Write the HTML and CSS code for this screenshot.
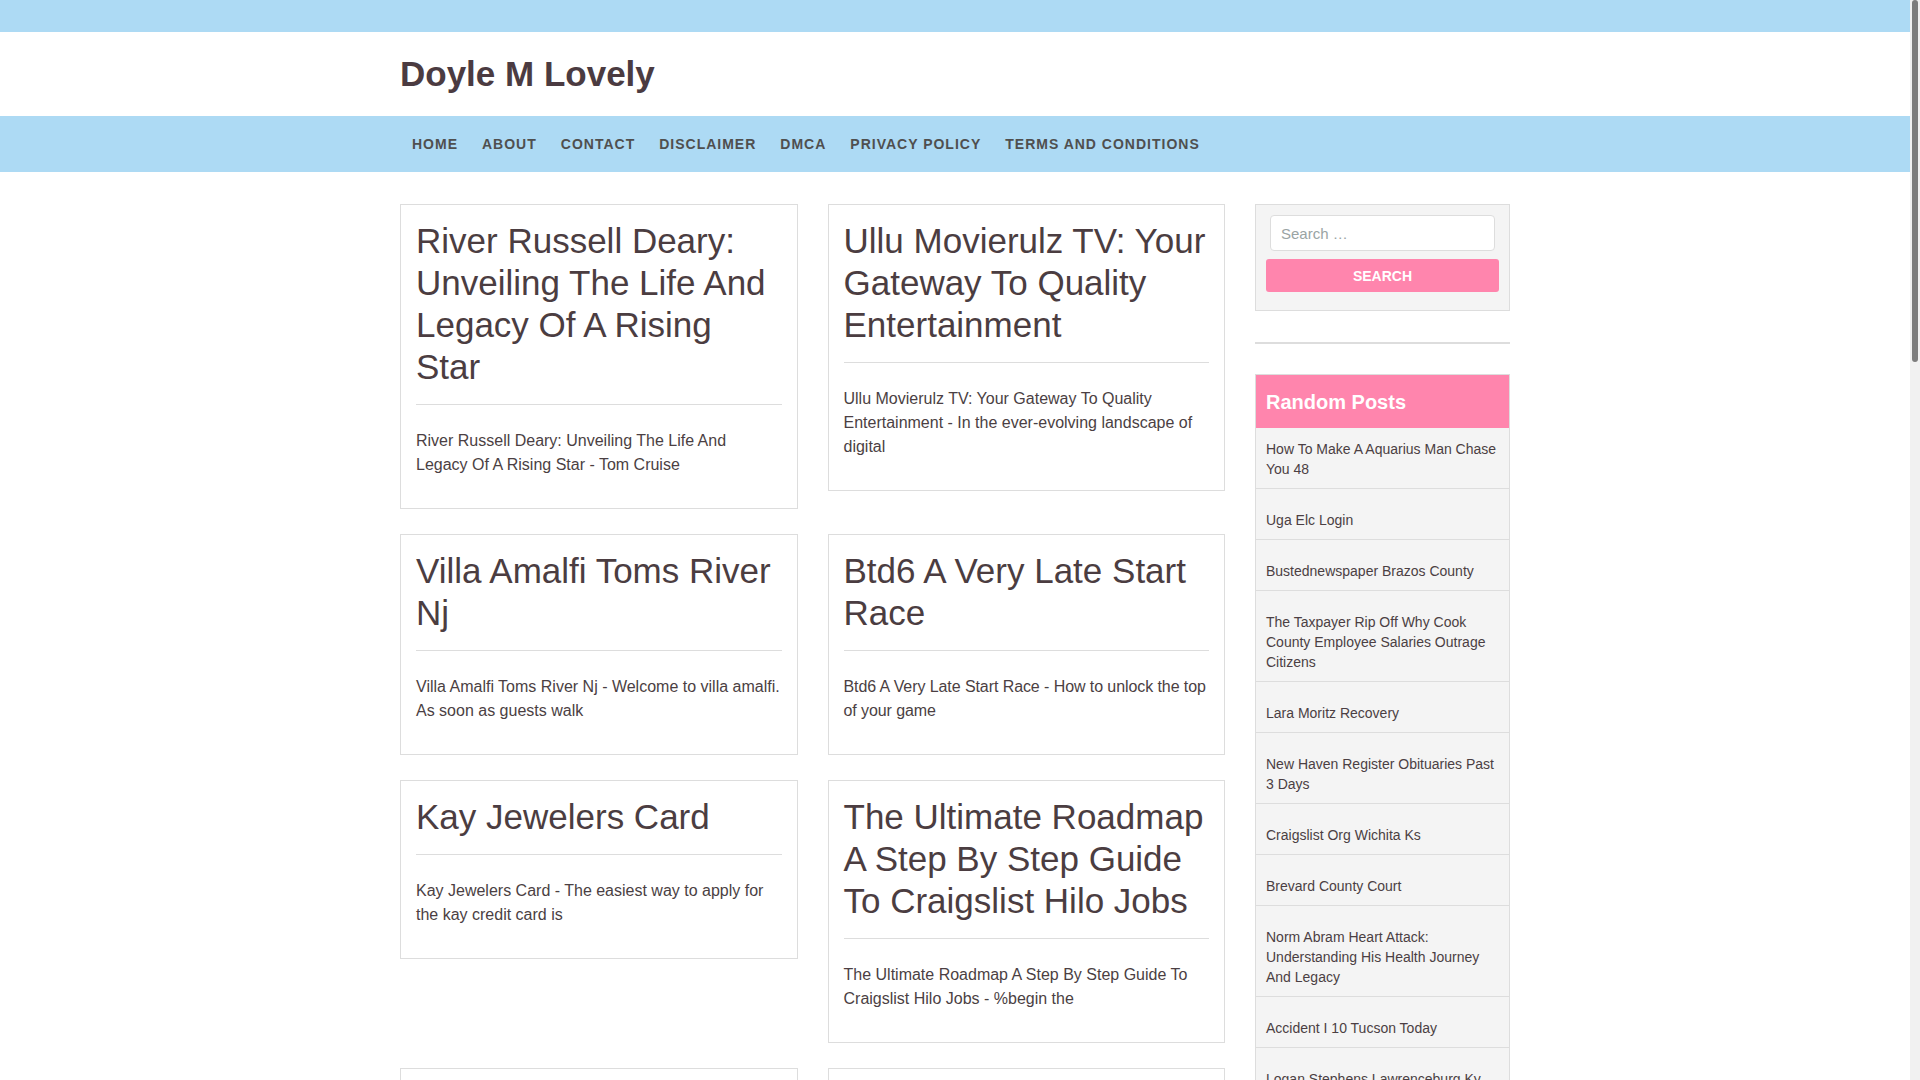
FILE: index.html
```html
<!DOCTYPE html>
<html lang="en">
<head>
<meta charset="utf-8">
<title>Doyle M Lovely</title>
<link rel="stylesheet" href="styles.css">
</head>
<body>
<div class="topbar"></div>
<header class="site-header">
  <div class="container">
    <h1 class="site-title">Doyle M Lovely</h1>
  </div>
</header>
<nav class="main-nav">
  <div class="container">
    <ul class="menu">
      <li><a href="#">Home</a></li>
      <li><a href="#">About</a></li>
      <li><a href="#">Contact</a></li>
      <li><a href="#">Disclaimer</a></li>
      <li><a href="#">DMCA</a></li>
      <li><a href="#">Privacy Policy</a></li>
      <li><a href="#">Terms and Conditions</a></li>
    </ul>
  </div>
</nav>
<div class="container content">
  <main class="posts">
    <article class="card">
      <h2 class="card-title">River Russell Deary: Unveiling The Life And Legacy Of A Rising Star</h2>
      <hr class="card-rule">
      <p class="card-excerpt">River Russell Deary: Unveiling The Life And Legacy Of A Rising Star - Tom Cruise</p>
    </article>
    <article class="card">
      <h2 class="card-title">Ullu Movierulz TV: Your Gateway To Quality Entertainment</h2>
      <hr class="card-rule">
      <p class="card-excerpt">Ullu Movierulz TV: Your Gateway To Quality Entertainment - In the ever-evolving landscape of digital</p>
    </article>
    <article class="card">
      <h2 class="card-title">Villa Amalfi Toms River Nj</h2>
      <hr class="card-rule">
      <p class="card-excerpt">Villa Amalfi Toms River Nj - Welcome to villa amalfi. As soon as guests walk</p>
    </article>
    <article class="card">
      <h2 class="card-title">Btd6 A Very Late Start Race</h2>
      <hr class="card-rule">
      <p class="card-excerpt card-excerpt-tight">Btd6 A Very Late Start Race - How to unlock the top of your game</p>
    </article>
    <article class="card">
      <h2 class="card-title">Kay Jewelers Card</h2>
      <hr class="card-rule">
      <p class="card-excerpt">Kay Jewelers Card - The easiest way to apply for the kay credit card is</p>
    </article>
    <article class="card">
      <h2 class="card-title">The Ultimate Roadmap A Step By Step Guide To Craigslist Hilo Jobs</h2>
      <hr class="card-rule">
      <p class="card-excerpt">The Ultimate Roadmap A Step By Step Guide To Craigslist Hilo Jobs - %begin the</p>
    </article>
    <article class="card">
      <h2 class="card-title">Craigslist Org Wichita Ks</h2>
      <hr class="card-rule">
      <p class="card-excerpt">Craigslist Org Wichita Ks - Find local listings for jobs, housing and more</p>
    </article>
    <article class="card">
      <h2 class="card-title">Brevard County Court</h2>
      <hr class="card-rule">
      <p class="card-excerpt">Brevard County Court - Records, calendars and information for the public</p>
    </article>
  </main>
  <aside class="sidebar">
    <div class="widget search-widget">
      <form class="search-form">
        <input class="search-field" type="search" placeholder="Search …">
        <button class="search-submit" type="button">Search</button>
      </form>
    </div>
    <div class="widget-sep"></div>
    <div class="widget posts-widget">
      <h3 class="widget-title">Random Posts</h3>
      <ul class="post-list">
        <li><a href="#">How To Make A Aquarius Man Chase You 48</a></li>
        <li><a href="#">Uga Elc Login</a></li>
        <li><a href="#">Bustednewspaper Brazos County</a></li>
        <li><a href="#">The Taxpayer Rip Off Why Cook County Employee Salaries Outrage Citizens</a></li>
        <li><a href="#">Lara Moritz Recovery</a></li>
        <li><a href="#">New Haven Register Obituaries Past 3 Days</a></li>
        <li><a href="#">Craigslist Org Wichita Ks</a></li>
        <li><a href="#">Brevard County Court</a></li>
        <li><a href="#">Norm Abram Heart Attack: Understanding His Health Journey And Legacy</a></li>
        <li><a href="#">Accident I 10 Tucson Today</a></li>
        <li><a href="#">Logan Stephens Lawrenceburg Ky</a></li>
        <li><a href="#">Kay Jewelers Card</a></li>
      </ul>
    </div>
  </aside>
</div>
<div class="scrollbar"><div class="scrollbar-thumb"></div></div>
</body>
</html>
```
FILE: styles.css
```css
html, body {
  margin: 0;
  padding: 0;
}
body {
  background: #ffffff;
  font-family: "Liberation Sans", Arial, sans-serif;
  color: #4b3d41;
  padding-right: 10px;
}
a {
  color: inherit;
  text-decoration: none;
}
.container {
  width: 1110px;
  margin: 0 auto;
}
.topbar {
  height: 32px;
  background: #addaf4;
}
.site-header {
  padding: 21px 0;
}
.site-title {
  margin: 0;
  font-size: 35px;
  line-height: 42px;
  font-weight: bold;
  color: #4b3b41;
}
.main-nav {
  background: #addaf4;
  height: 56px;
}
.menu {
  list-style: none;
  margin: 0;
  padding: 0;
  display: flex;
}
.menu a {
  display: block;
  padding: 0 12px;
  line-height: 56px;
  font-size: 14px;
  font-weight: bold;
  text-transform: uppercase;
  letter-spacing: 1px;
  color: #4f4f4f;
}
.content {
  display: flex;
  align-items: flex-start;
  gap: 30px;
  margin-top: 32px;
  padding-bottom: 40px;
}
.posts {
  width: 825px;
  flex: none;
  display: grid;
  grid-template-columns: 1fr 1fr;
  column-gap: 30px;
  row-gap: 25px;
  align-items: start;
}
.card {
  border: 1px solid #dddddd;
  background: #ffffff;
  padding: 15px;
}
.card-title {
  margin: 0 0 16px;
  font-size: 35px;
  line-height: 42px;
  font-weight: normal;
  color: #4b3d41;
}
.card-rule {
  margin: 0;
  border: 0;
  border-top: 1px solid #dddddd;
}
.card-excerpt {
  margin: 24px 0 16px;
  font-size: 16px;
  line-height: 24px;
  color: #4b3f43;
}
.card-excerpt-tight {
  letter-spacing: -0.08px;
}
.sidebar {
  width: 255px;
  flex: none;
}
.widget {
  border: 1px solid #dddddd;
  background: #f4f4f4;
}
.search-widget {
  padding: 10px 10px 18px;
}
.search-form {
  display: flex;
  flex-direction: column;
  gap: 8px;
}
.search-field {
  box-sizing: border-box;
  margin: 0 4px;
  height: 36px;
  padding: 0 10px;
  border: 1px solid #dddddd;
  border-radius: 4px;
  background: #ffffff;
  font-family: "Liberation Sans", Arial, sans-serif;
  font-size: 15px;
  color: #4b3d41;
}
.search-field::placeholder {
  color: #9aa4a4;
}
.search-submit {
  height: 33px;
  border: 0;
  border-radius: 3px;
  background: #ff85ad;
  color: #ffffff;
  font-family: "Liberation Sans", Arial, sans-serif;
  font-size: 14px;
  font-weight: bold;
  text-transform: uppercase;
  padding: 0;
}
.widget-sep {
  height: 2px;
  background: #dddddd;
  margin: 31px 0 30px;
}
.widget-title {
  margin: 0;
  padding: 15px 10px 14px;
  background: #ff85ad;
  color: #ffffff;
  font-size: 20px;
  line-height: 24px;
  font-weight: bold;
}
.post-list {
  list-style: none;
  margin: 0;
  padding: 0;
}
.post-list li {
  padding: 11px 7px 9px 10px;
  border-bottom: 1px solid #dddddd;
  font-size: 14px;
  line-height: 20px;
  color: #4b3f43;
}
.post-list li + li {
  padding-top: 21px;
}
.post-list li:last-child {
  border-bottom: 0;
}
.scrollbar {
  position: fixed;
  top: 0;
  right: 0;
  width: 10px;
  height: 100%;
  background: #f1f1f1;
}
.scrollbar-thumb {
  position: absolute;
  top: 0;
  right: 2px;
  width: 6px;
  height: 362px;
  border-radius: 3px;
  background: #7d7d7d;
}
```
